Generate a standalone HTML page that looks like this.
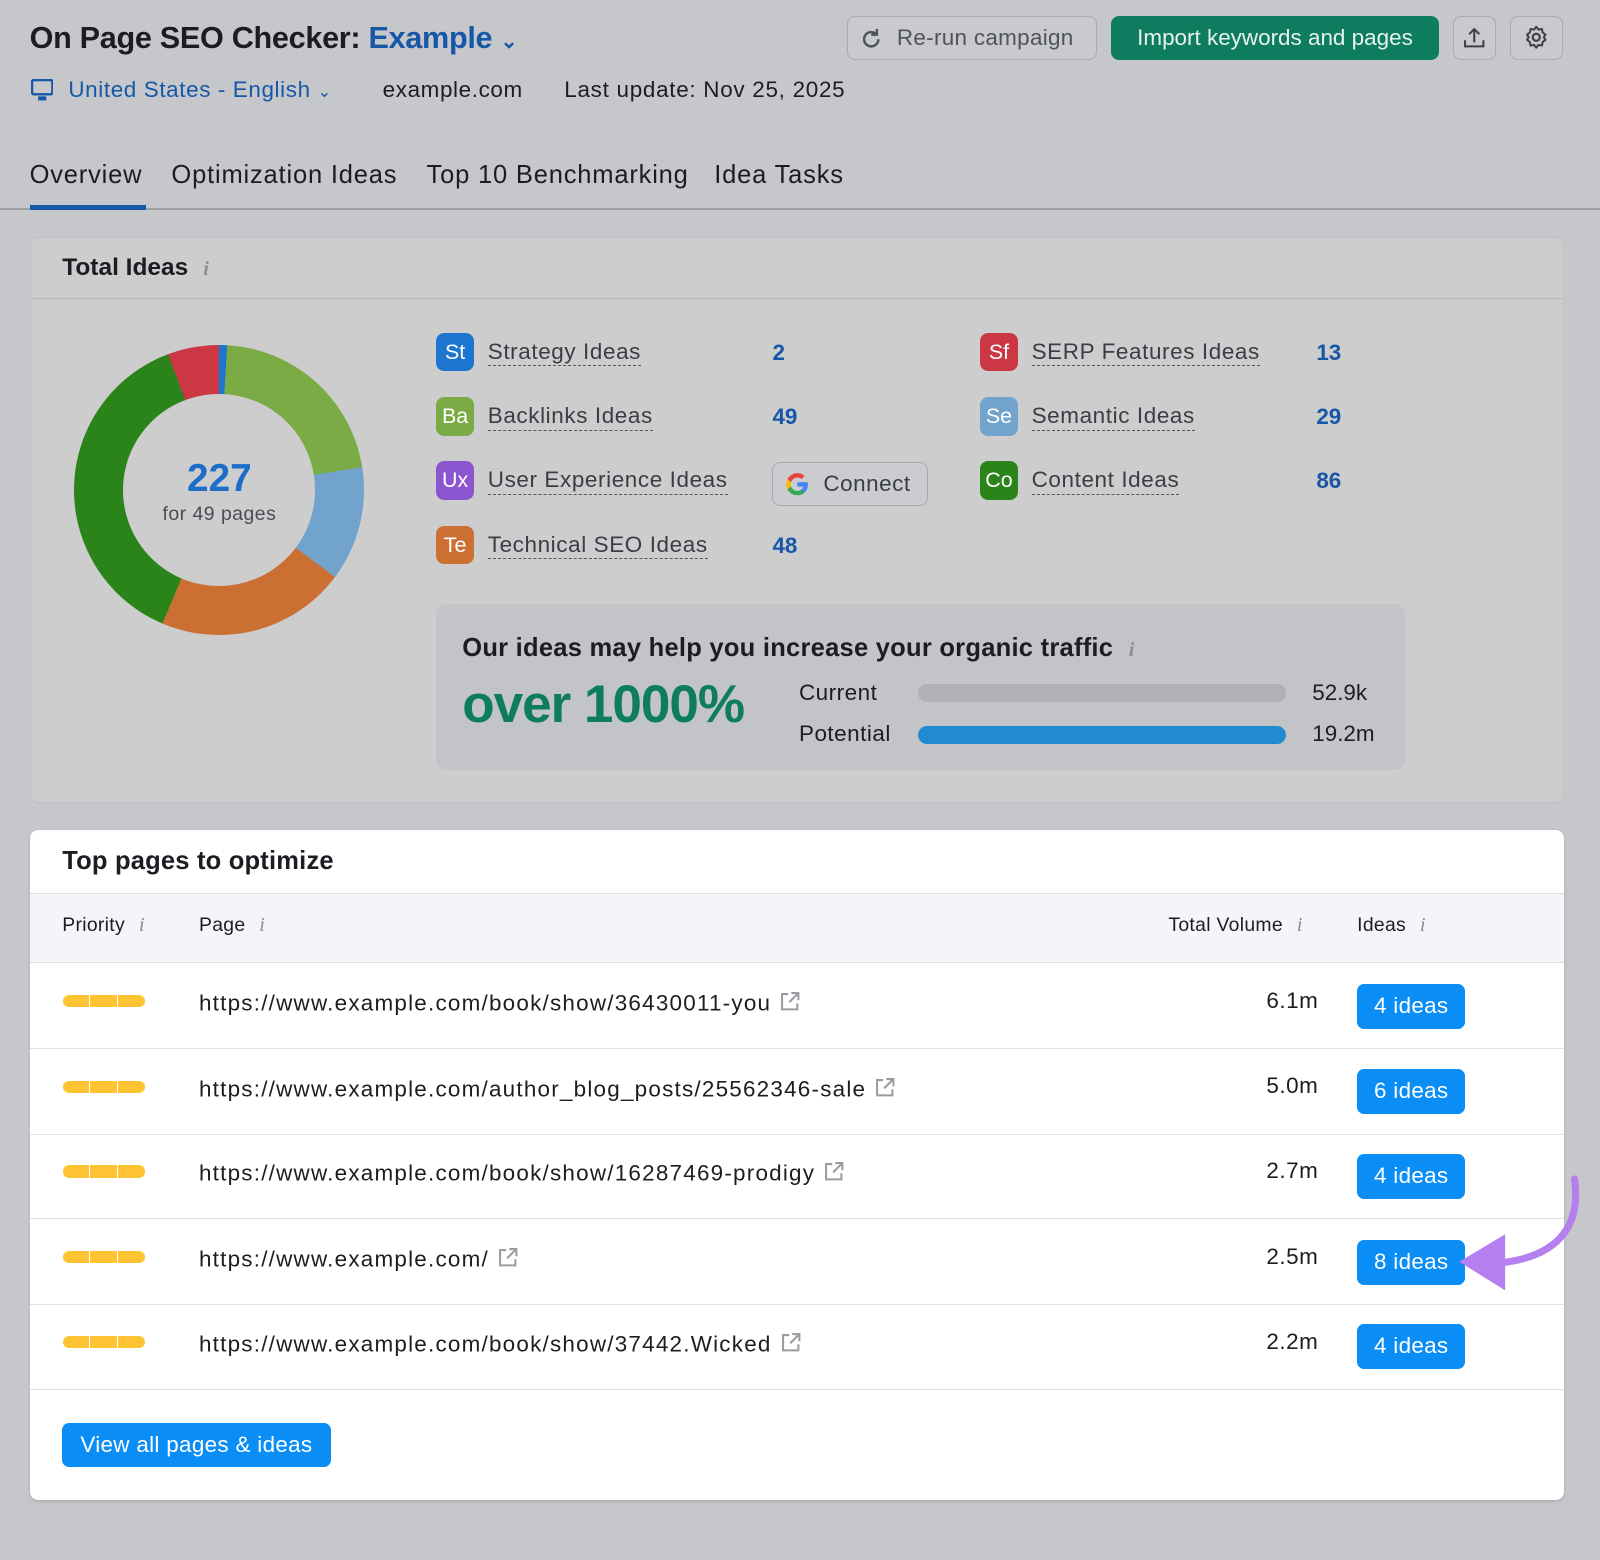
<!DOCTYPE html>
<html><head><meta charset="utf-8"><style>
*{box-sizing:border-box;margin:0;padding:0}
html,body{width:1600px;height:1529px;overflow:hidden;background:#c6c7cb}
body{zoom:1.0204;font-family:"Liberation Sans",sans-serif;color:#1b1d22}
#w{position:relative;width:1568px;height:1498px}
.a{position:absolute;white-space:nowrap}
.btn{position:absolute;border:1px solid #a9aab0;border-radius:8px;background:#c9cacd}
.card{position:absolute;border-radius:8px}
.ic{position:absolute;width:38px;height:38px;border-radius:8px;color:#fff;font-size:21px;line-height:38px;text-align:center}
.lb{position:absolute;font-size:22px;color:#3a3d45;border-bottom:1.5px dashed #55585f;line-height:26px;letter-spacing:.6px}
.num{position:absolute;font-size:22px;font-weight:bold;color:#1657a8}
.info{color:#8b8e96;font-style:italic;font-family:"Liberation Serif",serif;font-size:20px}
.row{position:absolute;left:29px;width:1504px;border-top:1.5px solid #dfe0e6}
.pr{position:absolute;left:62px;width:80px;height:12px;border-radius:6px;background:linear-gradient(90deg,#fdc332 0 32%,#fff 32% 33%,#fdc332 33% 66%,#fff 66% 67%,#fdc332 67%)}
.url{position:absolute;left:195px;font-size:22px;letter-spacing:1.2px}
.vol{position:absolute;right:276px;font-size:22px;letter-spacing:.5px}
.ib{position:absolute;left:1330px;width:106px;height:44px;border-radius:7px;background:#0a8df4;color:#fff;font-size:22px;line-height:44px;text-align:center;letter-spacing:.3px}
.ext{display:inline-block;vertical-align:-2px;margin-left:8px}
.tab{position:absolute;top:158px;font-size:25px;letter-spacing:.8px;white-space:nowrap}
</style></head><body><div id="w">
<div class="a" style="left:29px;top:21px;font-size:30px;font-weight:bold;color:#1b1d22;letter-spacing:-.3px">On Page SEO Checker: <span style="color:#1657a8">Example</span> <span style="color:#1657a8;font-size:20px">&#8964;</span></div>
<div class="btn" style="left:830px;top:16px;width:245px;height:43px;font-size:22px;color:#50535b;line-height:41px;padding-left:48px;letter-spacing:.3px">Re-run campaign</div>
<svg class="a" style="left:842px;top:26px" width="24" height="24" viewBox="0 0 24 24"><path d="M19 12a7 7 0 1 1-2.5-5.4" fill="none" stroke="#50535b" stroke-width="2.4"/><path d="M17.5 2v5.5H12" fill="none" stroke="#50535b" stroke-width="2.4"/></svg>
<div class="a" style="left:1089px;top:16px;width:321px;height:43px;border-radius:8px;background:#0e7d5f;color:#e8f3ee;font-size:22px;line-height:43px;text-align:center">Import keywords and pages</div>
<div class="btn" style="left:1424px;top:16px;width:42px;height:43px"></div>
<svg class="a" style="left:1433px;top:25px" width="24" height="24" viewBox="0 0 24 24"><path d="M12 16V3M7 8l5-5 5 5M3 14v6h18v-6" fill="none" stroke="#3d4048" stroke-width="2"/></svg>
<div class="btn" style="left:1480px;top:16px;width:52px;height:43px"></div>
<svg class="a" style="left:1493px;top:24px" width="26" height="26" viewBox="0 0 24 24"><circle cx="12" cy="12" r="3.2" fill="none" stroke="#3d4048" stroke-width="2"/><path d="M12 2.5l2 2.6 3.2-.6.6 3.2 2.6 2-1.6 2.3 1.6 2.3-2.6 2-.6 3.2-3.2-.6-2 2.6-2-2.6-3.2.6-.6-3.2-2.6-2 1.6-2.3-1.6-2.3 2.6-2 .6-3.2 3.2.6z" fill="none" stroke="#3d4048" stroke-width="1.8" stroke-linejoin="round"/></svg>
<svg class="a" style="left:30px;top:77px" width="22" height="22" viewBox="0 0 22 22"><rect x="1" y="1" width="20" height="14" rx="2" fill="none" stroke="#1657a8" stroke-width="2.4"/><rect x="7" y="17" width="8" height="4" fill="#1657a8"/></svg>
<div class="a" style="left:67px;top:75px;font-size:22px;color:#1657a8;letter-spacing:.6px">United States - English <span style="font-size:16px">&#8964;</span></div>
<div class="a" style="left:375px;top:75px;font-size:22px;letter-spacing:.6px">example.com</div>
<div class="a" style="left:553px;top:75px;font-size:22px;letter-spacing:.7px">Last update: Nov 25, 2025</div>
<div class="tab" style="left:29px">Overview</div>
<div class="tab" style="left:168px">Optimization Ideas</div>
<div class="tab" style="left:418px">Top 10 Benchmarking</div>
<div class="tab" style="left:700px">Idea Tasks</div>
<div class="a" style="left:0;top:204px;width:1568px;height:1.5px;background:#9d9fa5"></div>
<div class="a" style="left:29px;top:201px;width:114px;height:5px;background:#1657a8"></div>

<div class="card" style="left:29px;top:232px;width:1504px;height:555px;background:#cdcdce;border:1px solid #bfc0c3"></div>
<div class="a" style="left:61px;top:249px;font-size:24px;font-weight:bold">Total Ideas <span class="info" style="margin-left:8px">i</span></div>
<div class="a" style="left:29px;top:292px;width:1504px;height:1.5px;background:#b8b9bd"></div>
<div class="a" style="left:73px;top:338px;width:284px;height:284px;border-radius:50%;background:conic-gradient(#1c76d0 0 3.2deg,#7aab45 3.2deg 80.9deg,#72a3cd 80.9deg 126.9deg,#cc6f33 126.9deg 203deg,#2b8419 203deg 339.4deg,#cb3843 339.4deg 360deg)"></div>
<div class="a" style="left:121px;top:386px;width:188px;height:188px;border-radius:50%;background:#cdcdce"></div>
<div class="a" style="left:73px;top:448px;width:284px;text-align:center;font-size:38px;font-weight:bold;color:#1c6ec8">227</div>
<div class="a" style="left:73px;top:493px;width:284px;text-align:center;font-size:19px;color:#4a4d55;letter-spacing:.5px">for 49 pages</div>

<div class="ic" style="left:427px;top:326px;background:#1c76d0">St</div><div class="lb" style="left:478px;top:332px">Strategy Ideas</div><div class="num" style="left:757px;top:333px">2</div>
<div class="ic" style="left:427px;top:389px;background:#7aab45">Ba</div><div class="lb" style="left:478px;top:395px">Backlinks Ideas</div><div class="num" style="left:757px;top:396px">49</div>
<div class="ic" style="left:427px;top:452px;background:#8b55d0">Ux</div><div class="lb" style="left:478px;top:458px">User Experience Ideas</div>
<div class="btn" style="left:757px;top:453px;width:152px;height:43px;font-size:22px;color:#3a3d45;line-height:41px;padding-left:49px;background:#cbcccf;letter-spacing:.5px">Connect</div>
<svg class="a" style="left:768px;top:462px" width="26" height="26" viewBox="0 0 24 24"><path d="M21.6 12.2c0-.7-.1-1.3-.2-2H12v3.8h5.4a4.6 4.6 0 0 1-2 3v2.5h3.2c1.9-1.7 3-4.3 3-7.3z" fill="#4285f4"/><path d="M12 22c2.7 0 5-.9 6.6-2.4l-3.2-2.5c-.9.6-2 1-3.4 1-2.6 0-4.8-1.8-5.6-4.1H3.1v2.6A10 10 0 0 0 12 22z" fill="#34a853"/><path d="M6.4 14c-.2-.6-.3-1.3-.3-2s.1-1.4.3-2V7.4H3.1a10 10 0 0 0 0 9.2z" fill="#fbbc05"/><path d="M12 5.9c1.5 0 2.8.5 3.8 1.5l2.9-2.9A10 10 0 0 0 3.1 7.4L6.4 10c.8-2.3 3-4.1 5.6-4.1z" fill="#ea4335"/></svg>
<div class="ic" style="left:427px;top:515px;background:#cc6f33">Te</div><div class="lb" style="left:478px;top:521px">Technical SEO Ideas</div><div class="num" style="left:757px;top:522px">48</div>
<div class="ic" style="left:960px;top:326px;background:#cb3843">Sf</div><div class="lb" style="left:1011px;top:332px">SERP Features Ideas</div><div class="num" style="left:1290px;top:333px">13</div>
<div class="ic" style="left:960px;top:389px;background:#72a3cd">Se</div><div class="lb" style="left:1011px;top:395px">Semantic Ideas</div><div class="num" style="left:1290px;top:396px">29</div>
<div class="ic" style="left:960px;top:452px;background:#2b8419">Co</div><div class="lb" style="left:1011px;top:458px">Content Ideas</div><div class="num" style="left:1290px;top:459px">86</div>

<div class="a" style="left:427px;top:592px;width:950px;height:163px;border-radius:10px;background:#c3c4c8"></div>
<div class="a" style="left:453px;top:621px;font-size:25px;font-weight:bold;letter-spacing:.25px">Our ideas may help you increase your organic traffic <span class="info" style="margin-left:8px">i</span></div>
<div class="a" style="left:453px;top:661px;font-size:52px;font-weight:bold;color:#0e7d5f;letter-spacing:-1px">over 1000%</div>
<div class="a" style="left:783px;top:666px;font-size:22px;letter-spacing:.5px">Current</div>
<div class="a" style="left:783px;top:707px;font-size:22px;letter-spacing:.5px">Potential</div>
<div class="a" style="left:900px;top:670px;width:360px;height:18px;border-radius:9px;background:#b0b1b6"></div>
<div class="a" style="left:900px;top:711px;width:360px;height:18px;border-radius:9px;background:#228bd0"></div>
<div class="a" style="left:1286px;top:666px;font-size:22px">52.9k</div>
<div class="a" style="left:1286px;top:707px;font-size:22px">19.2m</div>

<div class="card" style="left:29px;top:813px;width:1504px;height:657px;background:#fff;box-shadow:0 1px 3px rgba(0,0,0,.15)"></div>
<div class="a" style="left:61px;top:830px;font-size:25px;font-weight:bold;letter-spacing:.2px">Top pages to optimize</div>
<div class="a" style="left:29px;top:875px;width:1504px;height:69px;background:#f4f5f9;border-top:1.5px solid #dfe0e6;border-bottom:1.5px solid #dfe0e6"></div>
<div class="a" style="left:61px;top:896px;font-size:19px;letter-spacing:.3px">Priority <span class="info" style="margin-left:8px">i</span></div>
<div class="a" style="left:195px;top:896px;font-size:19px;letter-spacing:.3px">Page <span class="info" style="margin-left:8px">i</span></div>
<div class="a" style="left:1145px;top:896px;font-size:19px;letter-spacing:.3px">Total Volume <span class="info" style="margin-left:8px">i</span></div>
<div class="a" style="left:1330px;top:896px;font-size:19px;letter-spacing:.3px">Ideas <span class="info" style="margin-left:8px">i</span></div>

<div class="pr" style="top:975px"></div><div class="url" style="top:970px">https://www.example.com/book/show/36430011-you<svg class="ext" width="22" height="22" viewBox="0 0 22 22"><path d="M9 4H3v15h15v-6M12 3h7v7M19 3l-9 9" fill="none" stroke="#9a9ca3" stroke-width="2"/></svg></div><div class="vol" style="top:968px">6.1m</div><div class="ib" style="top:964px">4 ideas</div>
<div class="row" style="top:1027px"></div>
<div class="pr" style="top:1059px"></div><div class="url" style="top:1054px">https://www.example.com/author_blog_posts/25562346-sale<svg class="ext" width="22" height="22" viewBox="0 0 22 22"><path d="M9 4H3v15h15v-6M12 3h7v7M19 3l-9 9" fill="none" stroke="#9a9ca3" stroke-width="2"/></svg></div><div class="vol" style="top:1052px">5.0m</div><div class="ib" style="top:1048px">6 ideas</div>
<div class="row" style="top:1111px"></div>
<div class="pr" style="top:1142px"></div><div class="url" style="top:1137px">https://www.example.com/book/show/16287469-prodigy<svg class="ext" width="22" height="22" viewBox="0 0 22 22"><path d="M9 4H3v15h15v-6M12 3h7v7M19 3l-9 9" fill="none" stroke="#9a9ca3" stroke-width="2"/></svg></div><div class="vol" style="top:1135px">2.7m</div><div class="ib" style="top:1131px">4 ideas</div>
<div class="row" style="top:1194px"></div>
<div class="pr" style="top:1226px"></div><div class="url" style="top:1221px">https://www.example.com/<svg class="ext" width="22" height="22" viewBox="0 0 22 22"><path d="M9 4H3v15h15v-6M12 3h7v7M19 3l-9 9" fill="none" stroke="#9a9ca3" stroke-width="2"/></svg></div><div class="vol" style="top:1219px">2.5m</div><div class="ib" style="top:1215px">8 ideas</div>
<div class="row" style="top:1278px"></div>
<div class="pr" style="top:1309px"></div><div class="url" style="top:1304px">https://www.example.com/book/show/37442.Wicked<svg class="ext" width="22" height="22" viewBox="0 0 22 22"><path d="M9 4H3v15h15v-6M12 3h7v7M19 3l-9 9" fill="none" stroke="#9a9ca3" stroke-width="2"/></svg></div><div class="vol" style="top:1302px">2.2m</div><div class="ib" style="top:1298px">4 ideas</div>
<div class="row" style="top:1361px"></div>
<div class="a" style="left:61px;top:1395px;width:263px;height:43px;border-radius:7px;background:#0a8df4;color:#fff;font-size:22px;line-height:43px;text-align:center;letter-spacing:.3px">View all pages &amp; ideas</div>

<svg class="a" style="left:1420px;top:1150px" width="140" height="120" viewBox="0 0 140 120"><path d="M123 6c6 40-10 75-72 82" fill="none" stroke="#b57ff0" stroke-width="7" stroke-linecap="round"/><path d="M10 87L55 60V115Z" fill="#b57ff0"/></svg>
</div></body></html>
